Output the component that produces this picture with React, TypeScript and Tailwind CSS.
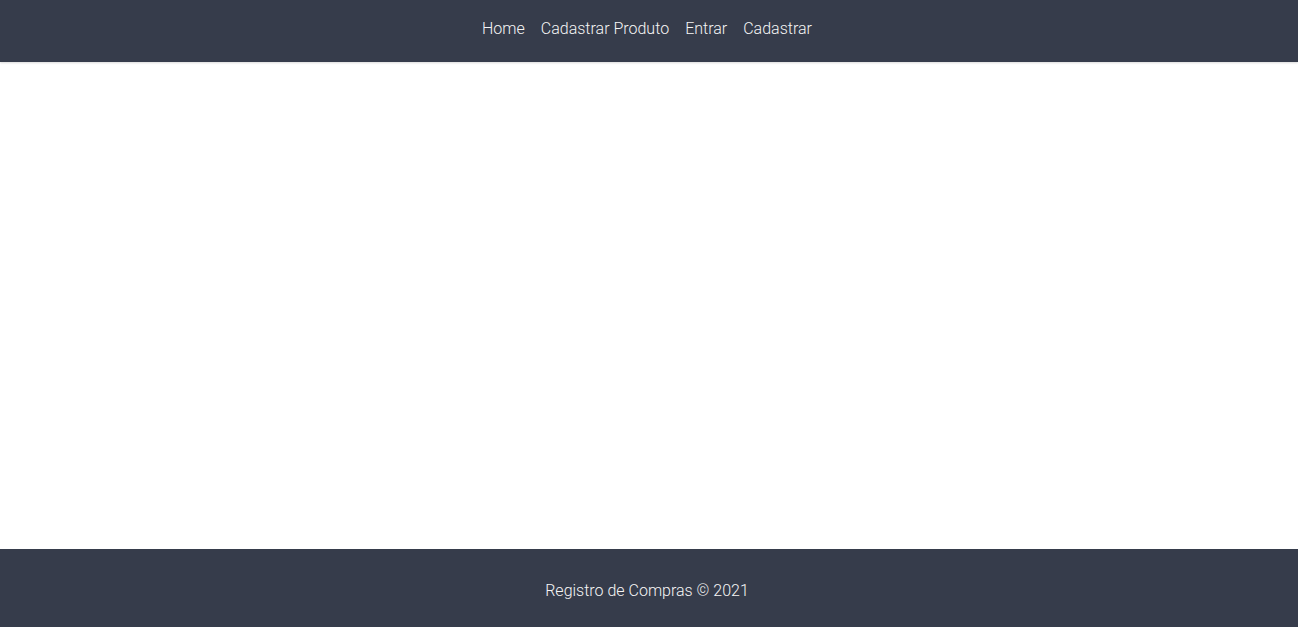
export default function App() {
  return (
    <div className="flex min-h-[627px] flex-col bg-white" style={{ fontFamily: "Roboto, 'Liberation Sans', sans-serif" }}>
      <header className="flex h-[62px] items-center justify-center bg-[#363c4b] pb-1 pr-1 shadow-[0_1px_2px_rgba(0,0,0,0.15)]">
        <nav className="flex items-center gap-4 text-[16px] font-light text-[#f5f5f5]">
          <a href="#">Home</a>
          <a href="#">Cadastrar Produto</a>
          <a href="#">Entrar</a>
          <a href="#">Cadastrar</a>
        </nav>
      </header>
      <main className="flex-1" />
      <footer className="flex h-[78px] items-center justify-center bg-[#363c4b] pr-1 pt-[6px] text-[16px] font-light text-[#f5f5f5]">
        Registro de Compras © 2021
      </footer>
    </div>
  );
}
